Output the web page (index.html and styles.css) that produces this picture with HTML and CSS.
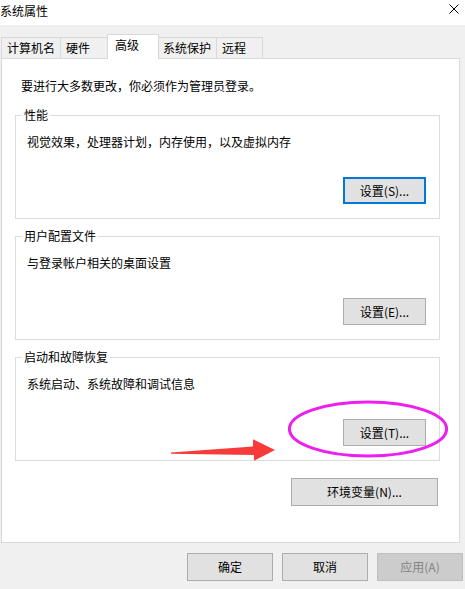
FILE: index.html
```html
<!DOCTYPE html>
<html lang="zh-CN">
<head>
<meta charset="utf-8">
<title>系统属性</title>
<link rel="stylesheet" href="styles.css">
</head>
<body>
<div class="window">
  <div class="titlebar">
    <span class="title">系统属性</span>
    <svg class="close" width="10" height="10" viewBox="0 0 10 10"><path d="M0.5 0.5L9.5 9.5M9.5 0.5L0.5 9.5" stroke="#000" stroke-width="1" fill="none"/></svg>
  </div>
  <div class="tabs">
    <div class="tab tab-name">计算机名</div>
    <div class="tab tab-hw">硬件</div>
    <div class="tab tab-adv active">高级</div>
    <div class="tab tab-prot">系统保护</div>
    <div class="tab tab-remote">远程</div>
  </div>
  <div class="panel">
    <p class="intro">要进行大多数更改，你必须作为管理员登录。</p>
    <section class="group first">
      <span class="legend">性能</span>
      <p class="desc">视觉效果，处理器计划，内存使用，以及虚拟内存</p>
      <button class="btn set focus">设置(S)...</button>
    </section>
    <section class="group">
      <span class="legend">用户配置文件</span>
      <p class="desc">与登录帐户相关的桌面设置</p>
      <button class="btn set">设置(E)...</button>
    </section>
    <section class="group">
      <span class="legend">启动和故障恢复</span>
      <p class="desc">系统启动、系统故障和调试信息</p>
      <button class="btn set">设置(T)...</button>
    </section>
    <button class="btn env">环境变量(N)...</button>
  </div>
  <div class="footer">
    <button class="btn foot">确定</button>
    <button class="btn foot">取消</button>
    <button class="btn foot disabled">应用(A)</button>
  </div>
  <svg class="annot" width="465" height="589" viewBox="0 0 465 589">
    <ellipse cx="368" cy="429" rx="78.6" ry="27" fill="none" stroke="#ee1eee" stroke-width="3"/>
    <polygon points="171,452.4 253,446.5 253,439.3 275,450 254,460.8 254,455 171,453.8" fill="#f93a3a"/>
  </svg>
</div>
</body>
</html>
```

FILE: styles.css
```css
* {
  box-sizing: border-box;
}

body {
  margin: 0;
  background: #f0f0f0;
  font-family: "Noto Sans CJK SC", "Microsoft YaHei", sans-serif;
  font-size: 12px;
  line-height: 16px;
  color: #000;
}

.window {
  position: relative;
  width: 465px;
  height: 589px;
  overflow: hidden;
}

.titlebar {
  height: 25px;
  background: #fff;
  display: flex;
  justify-content: space-between;
  align-items: flex-start;
}

.title {
  line-height: 22px;
}

.close {
  margin: 4px 6px 0 0;
}

.tabs {
  position: relative;
  z-index: 1;
  display: flex;
  align-items: flex-end;
  padding: 9px 0 0 1px;
  margin-bottom: -1px;
  height: 34px;
}

.tab {
  height: 21px;
  margin-bottom: 1px;
  margin-left: -1px;
  padding: 2px 0 0 5px;
  border: 1px solid #d9d9d9;
  border-bottom: none;
  background: #f0f0f0;
  white-space: nowrap;
}

.tab-name {
  margin-left: 0;
  width: 60px;
}

.tab-hw {
  width: 48px;
}

.tab-adv {
  width: 52px;
}

.tab-prot {
  width: 59px;
  padding-left: 4px;
}

.tab-remote {
  width: 47px;
}

.tab.active {
  height: 25px;
  margin-bottom: 0;
  padding: 2px 0 0 7px;
  background: #fff;
}

.panel {
  margin-left: 1px;
  width: 459px;
  height: 485px;
  background: #fff;
  border: 1px solid #d9d9d9;
  padding-top: 19px;
  display: flex;
  flex-direction: column;
}

.intro {
  margin: 0 0 0 19px;
}

.group {
  margin: 17px 19px 0 13px;
  border: 1px solid #dcdcdc;
  padding: 0 13px 14px 11px;
  display: flex;
  flex-direction: column;
}

.group.first {
  margin-top: 21px;
}

.legend {
  align-self: flex-start;
  margin: -9px 0 0 -5px;
  padding: 0 2px;
  background: #fff;
  line-height: 16px;
}

.desc {
  margin: 11px 0 0 0;
}

.btn {
  font-family: inherit;
  font-size: 12px;
  line-height: 16px;
  color: #000;
  background: #e1e1e1;
  border: 1px solid #adadad;
  padding: 0;
  margin: 0;
}

.btn.set {
  align-self: flex-end;
  width: 83px;
  height: 27px;
  margin-top: 27px;
}

.btn.focus {
  border: 2px solid #0078d7;
}

.btn.env {
  align-self: flex-end;
  width: 147px;
  height: 28px;
  margin: 17px 21px 0 0;
}

.footer {
  display: flex;
  justify-content: flex-end;
  gap: 9px;
  padding: 10px 2px 0 0;
}

.btn.foot {
  width: 86px;
  height: 28px;
}

.btn.disabled {
  background: #cccccc;
  border-color: #bfbfbf;
  color: #838383;
}

.annot {
  position: absolute;
  left: 0;
  top: 0;
  pointer-events: none;
}
```
